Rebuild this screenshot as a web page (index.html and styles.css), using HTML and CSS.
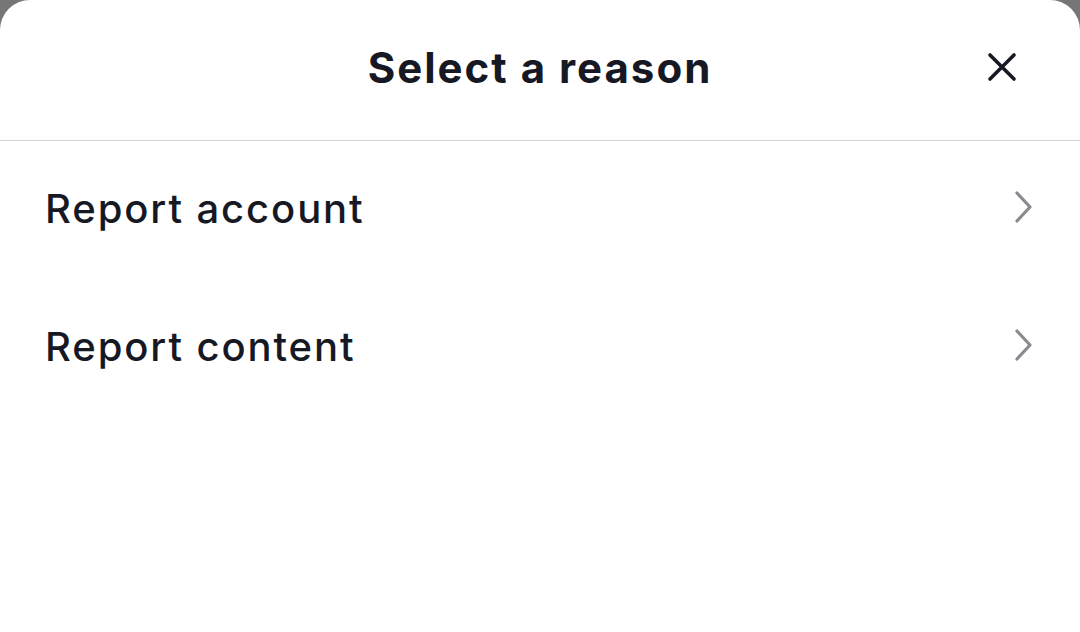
FILE: index.html
```html
<!DOCTYPE html>
<html lang="en">
<head>
<meta charset="utf-8">
<title>Select a reason</title>
<link rel="stylesheet" href="styles.css">
</head>
<body>
<div class="sheet">
  <div class="sheet-header">
    <h1 class="sheet-title">Select a reason</h1>
    <button class="close-btn" type="button" aria-label="Close">
      <svg width="30" height="30" viewBox="0 0 30 30">
        <path d="M3 3L27 27M27 3L3 27" stroke="#161823" stroke-width="3.6" stroke-linecap="round" fill="none"/>
      </svg>
    </button>
  </div>
  <ul class="reason-list">
    <li class="reason-item">
      <span class="reason-label">Report account</span>
      <svg class="chevron" width="20" height="34" viewBox="0 0 20 34">
        <path d="M3 2L16 16L3 30" stroke="#8a8b91" stroke-width="3.2" stroke-linecap="round" stroke-linejoin="round" fill="none"/>
      </svg>
    </li>
    <li class="reason-item">
      <span class="reason-label">Report content</span>
      <svg class="chevron" width="20" height="34" viewBox="0 0 20 34">
        <path d="M3 2L16 16L3 30" stroke="#8a8b91" stroke-width="3.2" stroke-linecap="round" stroke-linejoin="round" fill="none"/>
      </svg>
    </li>
  </ul>
</div>
</body>
</html>
```

FILE: styles.css
```css
html, body {
    margin: 0;
    padding: 0;
    height: 100%;
    background-color: #767676;
}

body {
    font-family: Inter, "Noto Sans", "Liberation Sans", sans-serif;
    color: #161823;
}

.sheet {
    height: 100%;
    background-color: #fff;
    border-radius: 30px 30px 0 0;
}

.sheet-header {
    height: 134px;
    padding-bottom: 6px;
    border-bottom: 1px solid #d4d4d6;
    display: flex;
    align-items: center;
    justify-content: center;
    position: relative;
}

.sheet-title {
    margin: 0;
    font-size: 42px;
    font-weight: 700;
    letter-spacing: 2px;
}

.close-btn {
    position: absolute;
    right: 63px;
    top: 52px;
    width: 30px;
    height: 30px;
    padding: 0;
    border: 0;
    background: none;
}

.close-btn svg {
    display: block;
}

.reason-list {
    list-style: none;
    margin: 0;
    padding: 0;
}

.reason-item {
    height: 138px;
    display: flex;
    align-items: center;
    justify-content: space-between;
    padding: 0 46px 4px 45px;
    box-sizing: border-box;
}

.reason-label {
    font-size: 40px;
    font-weight: 450;
    letter-spacing: 1.9px;
}

.chevron {
    display: block;
}
```
